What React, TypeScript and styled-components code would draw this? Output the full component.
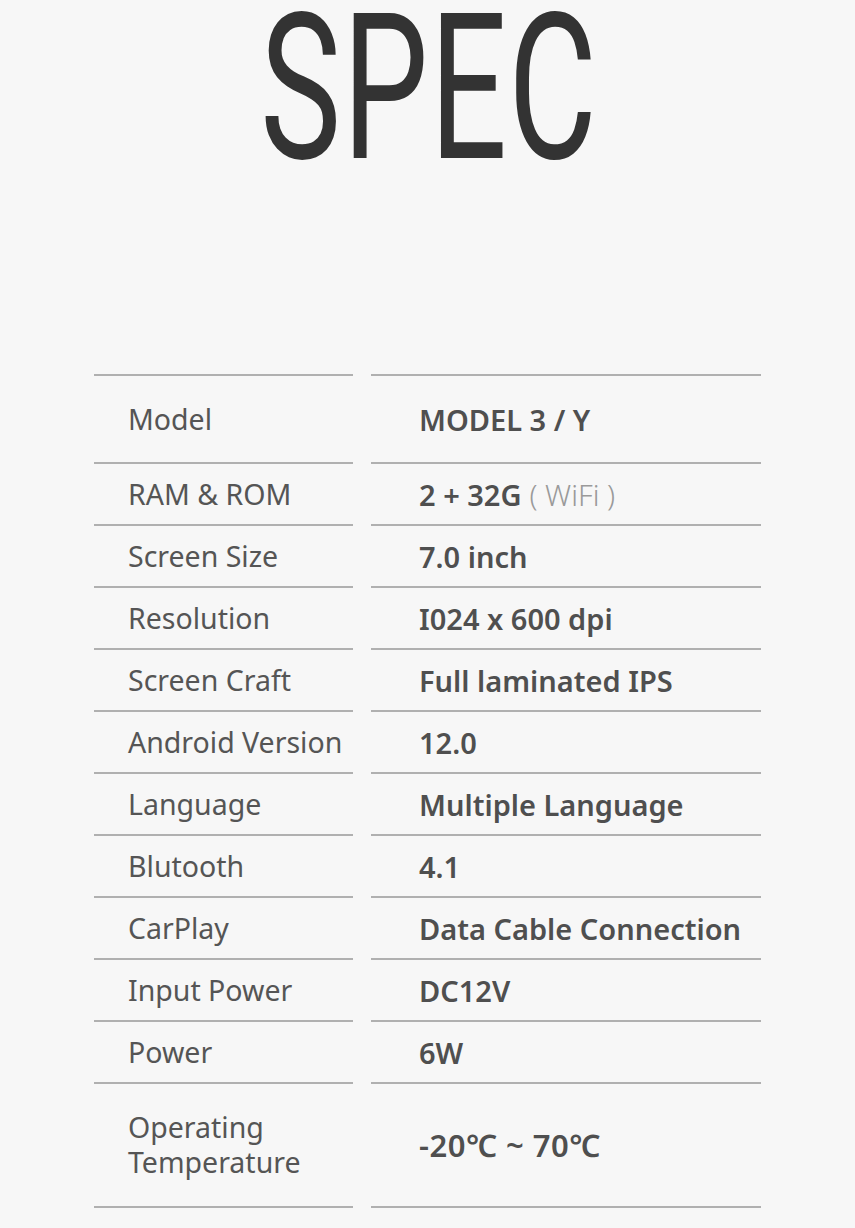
import React from "react";
import styled, { createGlobalStyle } from "styled-components";

const Global = createGlobalStyle`
  html, body { margin: 0; padding: 0; background: #f7f7f7; }
  body { font-family: "Noto Sans", "Open Sans", sans-serif; }
`;

const Page = styled.div`
  width: 855px;
  min-height: 1228px;
  background: #f7f7f7;
  display: flex;
  flex-direction: column;
  align-items: center;
  overflow: hidden;
`;

const TitleWrap = styled.div`
  height: 374px;
  width: 100%;
  display: flex;
  justify-content: center;
  align-items: flex-start;
`;

const Title = styled.h1`
  margin: 7px 0 0 4px;
  font-family: "Roboto", sans-serif;
  font-weight: 400;
  font-size: 204px;
  line-height: 0.8;
  color: #333333;
  letter-spacing: 2px;
  transform: scaleX(0.667);
  transform-origin: center top;
`;

const Table = styled.div`
  display: grid;
  grid-template-columns: 259px 390px;
  column-gap: 18px;
`;

const Cell = styled.div<{ $first?: boolean; $tall?: number }>`
  box-sizing: border-box;
  height: ${(p) => p.$tall ?? 62}px;
  border-bottom: 2px solid #b0b0b0;
  ${(p) => (p.$first ? "border-top: 2px solid #b0b0b0;" : "")}
  display: flex;
  align-items: center;
`;

const Label = styled(Cell)`
  padding-left: 34px;
  font-size: 28.5px;
  font-weight: 400;
  color: #555555;
  line-height: 35px;
`;

const Value = styled(Cell)`
  padding-left: 48px;
  font-size: 29px;
  font-weight: 600;
  color: #4f4f4f;
`;

const Light = styled.span`
  font-weight: 300;
  color: #9a9a9a;
  margin-left: 8px;
`;

const Temp = styled.span`
  font-size: 31px;
  letter-spacing: 0.5px;
`;

const rows: { label: React.ReactNode; value: React.ReactNode }[] = [
  { label: "Model", value: "MODEL 3 / Y" },
  { label: "RAM & ROM", value: <>2 + 32G<Light>( WiFi )</Light></> },
  { label: "Screen Size", value: "7.0 inch" },
  { label: "Resolution", value: "I024 x 600 dpi" },
  { label: "Screen Craft", value: "Full laminated IPS" },
  { label: "Android Version", value: "12.0" },
  { label: "Language", value: "Multiple Language" },
  { label: "Blutooth", value: "4.1" },
  { label: "CarPlay", value: "Data Cable Connection" },
  { label: "Input Power", value: "DC12V" },
  { label: "Power", value: "6W" },
  { label: <>Operating<br />Temperature</>, value: <Temp>-20℃ ~ 70℃</Temp> },
];

export default function App() {
  return (
    <Page>
      <Global />
      <TitleWrap>
        <Title>SPEC</Title>
      </TitleWrap>
      <Table>
        {rows.map((r, i) => {
          const first = i === 0;
          const last = i === rows.length - 1;
          const h = first ? 90 : last ? 124 : 62;
          return (
            <React.Fragment key={i}>
              <Label $first={first} $tall={h}>{r.label}</Label>
              <Value $first={first} $tall={h}>{r.value}</Value>
            </React.Fragment>
          );
        })}
      </Table>
    </Page>
  );
}
